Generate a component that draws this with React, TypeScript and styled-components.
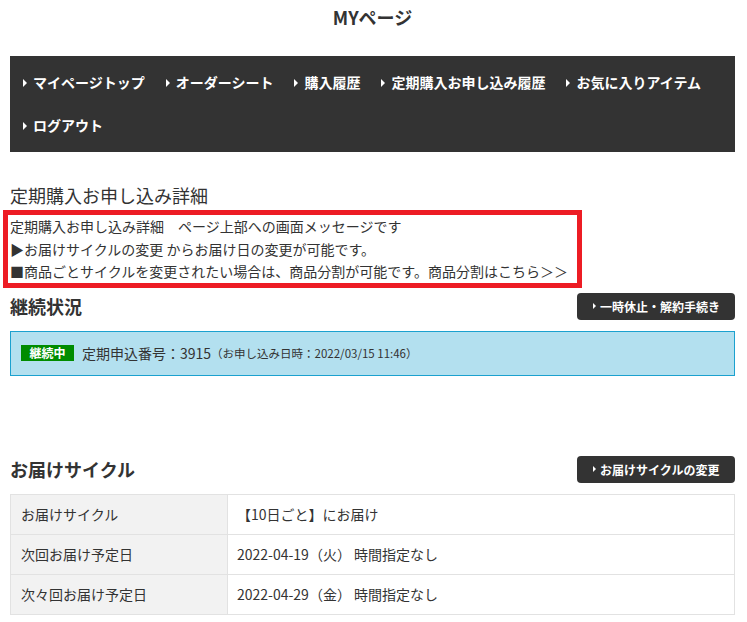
import styled, { createGlobalStyle } from 'styled-components';

const GlobalStyle = createGlobalStyle`
    body {
        margin: 0;
        background: #fff;
        color: #333;
        font-family: "Noto Sans CJK JP", "Noto Sans", sans-serif;
    }
`;

const Page = styled.div`
    padding: 0 12px 0 10px;
`;

const PageTitle = styled.h1`
    margin: 0 0 22px;
    height: 34px;
    line-height: 34px;
    font-size: 18px;
    font-weight: bold;
    text-align: center;
    color: #333;
`;

const Nav = styled.nav`
    display: flex;
    flex-wrap: wrap;
    column-gap: 20px;
    padding: 5px 12px;
    background: #333;
`;

const NavItem = styled.a`
    display: flex;
    align-items: center;
    line-height: 43px;
    font-size: 14px;
    font-weight: bold;
    color: #fff;
    text-decoration: none;
    white-space: nowrap;

    &::before {
        content: '';
        width: 0;
        height: 0;
        margin: 0 6px 0 1px;
        border-top: 4px solid transparent;
        border-bottom: 4px solid transparent;
        border-left: 4px solid #fff;
    }
`;

const SectionTitle = styled.h2`
    margin: 30px 0 2px;
    line-height: 26px;
    font-size: 18px;
    font-weight: normal;
    color: #333;
`;

const NoticeBox = styled.div`
    box-sizing: border-box;
    width: 579px;
    margin-left: -7px;
    padding: 0 4px 0 2px;
    border: 5px solid #ed1c24;
    font-size: 14px;
    line-height: 22.6px;
    color: #333;
    white-space: nowrap;
`;

const HeaderRow = styled.div<{ $top: number }>`
    display: flex;
    justify-content: space-between;
    align-items: center;
    margin-top: ${(p) => p.$top}px;
    height: 27px;
`;

const BlockTitle = styled.h3`
    margin: 0;
    font-size: 18px;
    font-weight: bold;
    color: #333;
`;

const DarkButton = styled.button`
    display: flex;
    align-items: center;
    box-sizing: border-box;
    width: 158px;
    height: 27px;
    padding: 0 0 0 16px;
    border: none;
    border-radius: 4px;
    background: #333;
    color: #fff;
    font-family: inherit;
    font-size: 12px;
    font-weight: bold;
    white-space: nowrap;

    &::before {
        content: '';
        width: 0;
        height: 0;
        margin-right: 4px;
        border-top: 3.5px solid transparent;
        border-bottom: 3.5px solid transparent;
        border-left: 3.5px solid #fff;
    }
`;

const StatusBox = styled.div`
    display: flex;
    align-items: center;
    box-sizing: border-box;
    height: 45px;
    margin-top: 11px;
    padding: 0 10px;
    background: #b3e0ef;
    border: 1px solid #1ba1cf;
    white-space: nowrap;
`;

const Badge = styled.span`
    display: inline-block;
    width: 53px;
    height: 16px;
    margin-right: 8px;
    background: #008c00;
    color: #fff;
    font-size: 12px;
    font-weight: bold;
    line-height: 16px;
    text-align: center;
`;

const StatusText = styled.span`
    font-size: 14px;
    color: #333;
`;

const StatusDate = styled.span`
    font-size: 11.5px;
    color: #333;
`;

const InfoTable = styled.table`
    width: 100%;
    margin-top: 11px;
    border-collapse: collapse;
    font-size: 14px;
    color: #333;
`;

const HeadCell = styled.th`
    box-sizing: border-box;
    width: 217px;
    height: 39px;
    padding: 0 10px;
    border: 1px solid #e2e2e2;
    background: #f2f2f2;
    font-weight: normal;
    text-align: left;
`;

const DataCell = styled.td`
    height: 39px;
    padding: 0 9px;
    border: 1px solid #e2e2e2;
    background: #fff;
`;

const navLinks = [
    'マイページトップ',
    'オーダーシート',
    '購入履歴',
    '定期購入お申し込み履歴',
    'お気に入りアイテム',
    'ログアウト',
];

const cycleRows = [
    { label: 'お届けサイクル', value: '【10日ごと】にお届け' },
    { label: '次回お届け予定日', value: '2022-04-19（火） 時間指定なし' },
    { label: '次々回お届け予定日', value: '2022-04-29（金） 時間指定なし' },
];

export default function App() {
    return (
        <>
            <GlobalStyle />
            <Page>
                <PageTitle>MYページ</PageTitle>
                <Nav>
                    {navLinks.map((label) => (
                        <NavItem key={label}>{label}</NavItem>
                    ))}
                </Nav>

                <SectionTitle>定期購入お申し込み詳細</SectionTitle>
                <NoticeBox>
                    <div>定期購入お申し込み詳細　ページ上部への画面メッセージです</div>
                    <div>▶お届けサイクルの変更 からお届け日の変更が可能です。</div>
                    <div>■商品ごとサイクルを変更されたい場合は、商品分割が可能です。商品分割はこちら＞＞</div>
                </NoticeBox>

                <HeaderRow $top={5}>
                    <BlockTitle>継続状況</BlockTitle>
                    <DarkButton>一時休止・解約手続き</DarkButton>
                </HeaderRow>
                <StatusBox>
                    <Badge>継続中</Badge>
                    <StatusText>定期申込番号：3915</StatusText>
                    <StatusDate>（お申し込み日時：2022/03/15 11:46）</StatusDate>
                </StatusBox>

                <HeaderRow $top={80}>
                    <BlockTitle>お届けサイクル</BlockTitle>
                    <DarkButton>お届けサイクルの変更</DarkButton>
                </HeaderRow>
                <InfoTable>
                    <tbody>
                        {cycleRows.map((row) => (
                            <tr key={row.label}>
                                <HeadCell>{row.label}</HeadCell>
                                <DataCell>{row.value}</DataCell>
                            </tr>
                        ))}
                    </tbody>
                </InfoTable>
            </Page>
        </>
    );
}
